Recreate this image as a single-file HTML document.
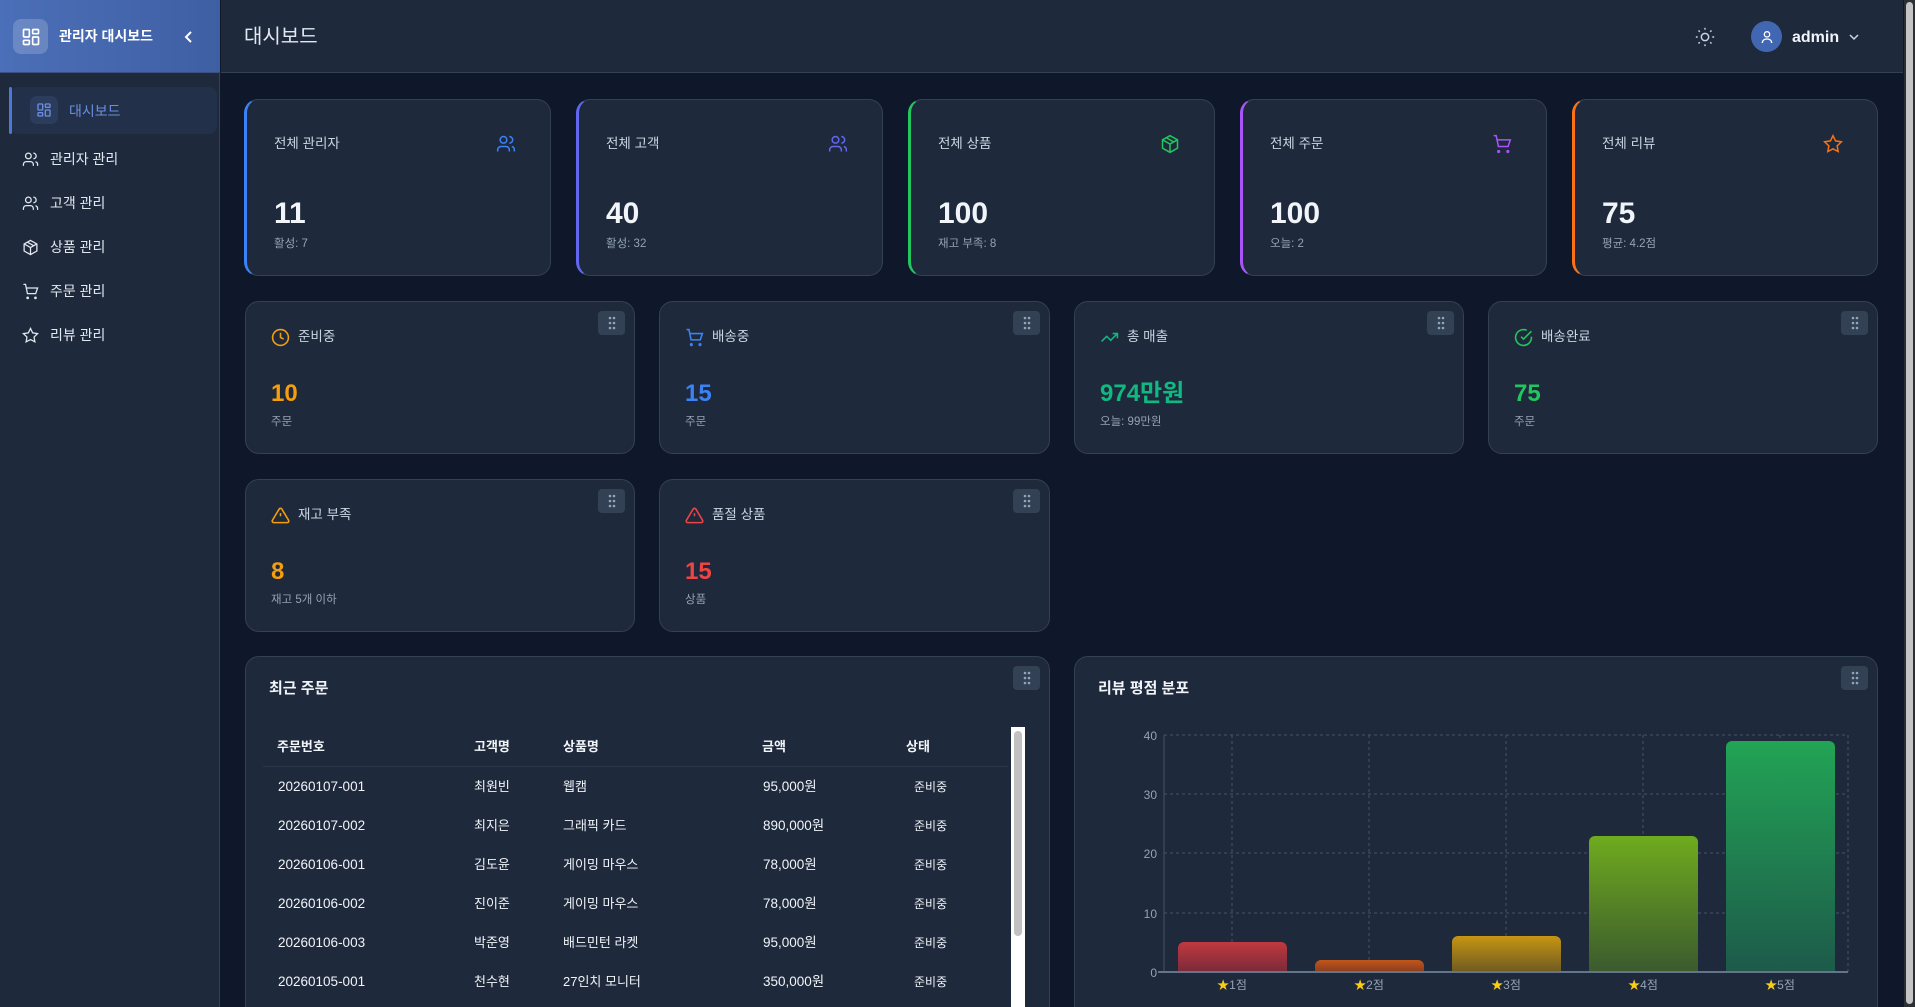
<!DOCTYPE html>
<html><head><meta charset="utf-8"><style>
*{box-sizing:border-box;margin:0;padding:0}
html{width:1915px;height:1007px;overflow:hidden}
body{width:1915px;height:1007px;overflow:hidden;background:#0f172a;font-family:"Liberation Sans","Noto Sans CJK KR",sans-serif;color:#e2e8f0;position:relative;line-height:1.2}
.abs{position:absolute}
.side{left:0;top:0;width:220px;height:1007px;background:#1e293b;border-right:1px solid #334155}
.sh{left:0;top:0;width:220px;height:73px;background:linear-gradient(90deg,#4b6fb8,#3f5fa3);border-bottom:1px solid #3b5080}
.hdr{left:221px;top:0;width:1682px;height:73px;background:#1e293b;border-bottom:1px solid #334155}
.card{position:absolute;background:#1e293b;border:1px solid #334155;border-radius:14px}
.tc .t{position:absolute;left:27px;top:36px;font-size:13.5px;color:#cbd5e1}
.tc .n{position:absolute;left:27px;top:99px;font-size:30px;font-weight:bold;color:#f1f5f9;line-height:1}
.tc .s{position:absolute;left:27px;top:138px;font-size:11.5px;color:#94a3b8}
.tc svg{position:absolute;right:34px;top:34px}
.mc .t{position:absolute;left:25px;top:26px;font-size:13.5px;color:#cbd5e1;display:flex;align-items:center;gap:8px}
.mc .n{position:absolute;left:25px;top:80px;font-size:24px;font-weight:bold;line-height:1}
.mc .s{position:absolute;left:25px;top:114px;font-size:11.5px;color:#94a3b8}
.dh{position:absolute;right:9px;top:9px;width:27px;height:24px;background:#334155;border-radius:4px;display:flex;align-items:center;justify-content:center}
.nav{position:absolute;left:22px;font-size:14px;color:#e2e8f0;display:flex;align-items:center;gap:11px}
.row{position:absolute;font-size:13.5px;color:#f1f5f9;line-height:16px;height:16px}
</style></head><body>
<div class="abs side"></div>
<div class="abs sh"></div>
<div class="abs" style="left:13px;top:19px;width:35px;height:35px;border-radius:8px;background:rgba(255,255,255,.18);display:flex;align-items:center;justify-content:center">
<svg width="20" height="20" viewBox="0 0 24 24" fill="none" stroke="#fff" stroke-width="2"><rect x="3" y="3" width="7" height="9" rx="1"/><rect x="14" y="3" width="7" height="5" rx="1"/><rect x="14" y="12" width="7" height="9" rx="1"/><rect x="3" y="16" width="7" height="5" rx="1"/></svg></div>
<div class="abs" style="left:59px;top:28px;font-size:14px;font-weight:bold;color:#fff">관리자 대시보드</div>
<svg class="abs" style="left:183px;top:30px" width="12" height="14" viewBox="0 0 12 14" fill="none" stroke="#fff" stroke-width="2"><path d="M8 2L3 7l5 5"/></svg>
<div class="abs hdr"></div>
<div class="abs" style="left:244px;top:25px;font-size:20px;color:#e2e8f0">대시보드</div>
<svg class="abs" style="left:1694px;top:26px" width="22" height="22" viewBox="0 0 24 24" fill="none" stroke="#cbd5e1" stroke-width="1.6"><circle cx="12" cy="12" r="4"/><path d="M12 2v2M12 20v2M4.9 4.9l1.4 1.4M17.7 17.7l1.4 1.4M2 12h2M20 12h2M4.9 19.1l1.4-1.4M17.7 6.3l1.4-1.4"/></svg>
<div class="abs" style="left:1751px;top:21px;width:31px;height:31px;border-radius:50%;background:#4267b2;display:flex;align-items:center;justify-content:center">
<svg width="16" height="16" viewBox="0 0 24 24" fill="none" stroke="#fff" stroke-width="2"><circle cx="12" cy="8" r="4"/><path d="M5 21c0-4 3-6 7-6s7 2 7 6"/></svg></div>
<div class="abs" style="left:1792px;top:28px;font-size:16px;font-weight:bold;color:#f1f5f9">admin</div>
<svg class="abs" style="left:1848px;top:32px" width="12" height="10" viewBox="0 0 12 10" fill="none" stroke="#cbd5e1" stroke-width="1.5"><path d="M2 3l4 4 4-4"/></svg>
<div class="abs" style="left:1904px;top:0;width:11px;height:1007px;background:#2b2f36"></div>
<div class="abs" style="left:1906px;top:2px;width:7px;height:1002px;background:#c4c4c4;border-radius:4px"></div>

<div class="abs" style="left:10px;top:87px;width:207px;height:47px;background:#233049;border-radius:8px"></div>
<div class="abs" style="left:9px;top:87px;width:3px;height:47px;background:#4f78d6;border-radius:2px"></div>
<div class="abs" style="left:30px;top:96px;width:28px;height:28px;background:#2c3c5c;border-radius:7px;display:flex;align-items:center;justify-content:center">
<svg width="16" height="16" viewBox="0 0 24 24" fill="none" stroke="#6b8fe0" stroke-width="2"><rect x="3" y="3" width="7" height="9" rx="1"/><rect x="14" y="3" width="7" height="5" rx="1"/><rect x="14" y="12" width="7" height="9" rx="1"/><rect x="3" y="16" width="7" height="5" rx="1"/></svg></div>
<div class="abs" style="left:69px;top:103px;font-size:14px;color:#6b8fe0">대시보드</div>
<div class="nav" style="top:151px"><svg width="17" height="17" viewBox="0 0 24 24" fill="none" stroke="#e2e8f0" stroke-width="1.8"><circle cx="9" cy="7" r="4"/><path d="M2 21v-2a4 4 0 014-4h6a4 4 0 014 4v2M16 3a4 4 0 010 8M22 21v-2a4 4 0 00-3-3.9"/></svg>관리자 관리</div>
<div class="nav" style="top:195px"><svg width="17" height="17" viewBox="0 0 24 24" fill="none" stroke="#e2e8f0" stroke-width="1.8"><circle cx="9" cy="7" r="4"/><path d="M2 21v-2a4 4 0 014-4h6a4 4 0 014 4v2M16 3a4 4 0 010 8M22 21v-2a4 4 0 00-3-3.9"/></svg>고객 관리</div>
<div class="nav" style="top:239px"><svg width="17" height="17" viewBox="0 0 24 24" fill="none" stroke="#e2e8f0" stroke-width="1.8"><path d="M12 2l9 5v10l-9 5-9-5V7z"/><path d="M3 7l9 5 9-5M12 12v10M7.5 4.5l9 5"/></svg>상품 관리</div>
<div class="nav" style="top:283px"><svg width="17" height="17" viewBox="0 0 24 24" fill="none" stroke="#e2e8f0" stroke-width="1.8"><circle cx="8" cy="21" r="1"/><circle cx="19" cy="21" r="1"/><path d="M2 2h3l2.7 13h11.6L22 7H6"/></svg>주문 관리</div>
<div class="nav" style="top:327px"><svg width="17" height="17" viewBox="0 0 24 24" fill="none" stroke="#e2e8f0" stroke-width="1.8"><path d="M12 2l3.1 6.3 6.9 1-5 4.9 1.2 6.8L12 17.8 5.8 21l1.2-6.8-5-4.9 6.9-1z"/></svg>리뷰 관리</div>

<div class="card tc" style="left:244px;top:99px;width:307px;height:177px;border-left:3px solid #3b82f6"><div class="t">전체 관리자</div><svg width="20" height="20" viewBox="0 0 24 24" fill="none" stroke="#3b82f6" stroke-width="1.8"><circle cx="9" cy="7" r="4"/><path d="M2 21v-2a4 4 0 014-4h6a4 4 0 014 4v2M16 3a4 4 0 010 8M22 21v-2a4 4 0 00-3-3.9"/></svg><div class="n">11</div><div class="s">활성: 7</div></div>
<div class="card tc" style="left:576px;top:99px;width:307px;height:177px;border-left:3px solid #6366f1"><div class="t">전체 고객</div><svg width="20" height="20" viewBox="0 0 24 24" fill="none" stroke="#6366f1" stroke-width="1.8"><circle cx="9" cy="7" r="4"/><path d="M2 21v-2a4 4 0 014-4h6a4 4 0 014 4v2M16 3a4 4 0 010 8M22 21v-2a4 4 0 00-3-3.9"/></svg><div class="n">40</div><div class="s">활성: 32</div></div>
<div class="card tc" style="left:908px;top:99px;width:307px;height:177px;border-left:3px solid #22c55e"><div class="t">전체 상품</div><svg width="20" height="20" viewBox="0 0 24 24" fill="none" stroke="#22c55e" stroke-width="1.8"><path d="M12 2l9 5v10l-9 5-9-5V7z"/><path d="M3 7l9 5 9-5M12 12v10M7.5 4.5l9 5"/></svg><div class="n">100</div><div class="s">재고 부족: 8</div></div>
<div class="card tc" style="left:1240px;top:99px;width:307px;height:177px;border-left:3px solid #a855f7"><div class="t">전체 주문</div><svg width="20" height="20" viewBox="0 0 24 24" fill="none" stroke="#a855f7" stroke-width="1.8"><circle cx="8" cy="21" r="1"/><circle cx="19" cy="21" r="1"/><path d="M2 2h3l2.7 13h11.6L22 7H6"/></svg><div class="n">100</div><div class="s">오늘: 2</div></div>
<div class="card tc" style="left:1572px;top:99px;width:306px;height:177px;border-left:3px solid #f97316"><div class="t">전체 리뷰</div><svg width="20" height="20" viewBox="0 0 24 24" fill="none" stroke="#f97316" stroke-width="1.8"><path d="M12 2l3.1 6.3 6.9 1-5 4.9 1.2 6.8L12 17.8 5.8 21l1.2-6.8-5-4.9 6.9-1z"/></svg><div class="n">75</div><div class="s">평균: 4.2점</div></div>

<div class="card mc" style="left:245px;top:301px;width:390px;height:153px"><div class="dh"><svg width="8" height="14"><g fill="#94a3b8"><circle cx="2" cy="2" r="1.3"/><circle cx="6" cy="2" r="1.3"/><circle cx="2" cy="7" r="1.3"/><circle cx="6" cy="7" r="1.3"/><circle cx="2" cy="12" r="1.3"/><circle cx="6" cy="12" r="1.3"/></g></svg></div><div class="t"><svg width="19" height="19" viewBox="0 0 24 24" fill="none" stroke="#f59e0b" stroke-width="2"><circle cx="12" cy="12" r="10"/><path d="M12 6v6l4 2"/></svg>준비중</div><div class="n" style="color:#f59e0b">10</div><div class="s">주문</div></div>
<div class="card mc" style="left:659px;top:301px;width:391px;height:153px"><div class="dh"><svg width="8" height="14"><g fill="#94a3b8"><circle cx="2" cy="2" r="1.3"/><circle cx="6" cy="2" r="1.3"/><circle cx="2" cy="7" r="1.3"/><circle cx="6" cy="7" r="1.3"/><circle cx="2" cy="12" r="1.3"/><circle cx="6" cy="12" r="1.3"/></g></svg></div><div class="t"><svg width="19" height="19" viewBox="0 0 24 24" fill="none" stroke="#3b82f6" stroke-width="2"><circle cx="8" cy="21" r="1"/><circle cx="19" cy="21" r="1"/><path d="M2 2h3l2.7 13h11.6L22 7H6"/></svg>배송중</div><div class="n" style="color:#3b82f6">15</div><div class="s">주문</div></div>
<div class="card mc" style="left:1074px;top:301px;width:390px;height:153px"><div class="dh"><svg width="8" height="14"><g fill="#94a3b8"><circle cx="2" cy="2" r="1.3"/><circle cx="6" cy="2" r="1.3"/><circle cx="2" cy="7" r="1.3"/><circle cx="6" cy="7" r="1.3"/><circle cx="2" cy="12" r="1.3"/><circle cx="6" cy="12" r="1.3"/></g></svg></div><div class="t"><svg width="19" height="19" viewBox="0 0 24 24" fill="none" stroke="#10b981" stroke-width="2"><path d="M22 7l-8.5 8.5-5-5L2 17M16 7h6v6"/></svg>총 매출</div><div class="n" style="color:#10b981">974만원</div><div class="s">오늘: 99만원</div></div>
<div class="card mc" style="left:1488px;top:301px;width:390px;height:153px"><div class="dh"><svg width="8" height="14"><g fill="#94a3b8"><circle cx="2" cy="2" r="1.3"/><circle cx="6" cy="2" r="1.3"/><circle cx="2" cy="7" r="1.3"/><circle cx="6" cy="7" r="1.3"/><circle cx="2" cy="12" r="1.3"/><circle cx="6" cy="12" r="1.3"/></g></svg></div><div class="t"><svg width="19" height="19" viewBox="0 0 24 24" fill="none" stroke="#22c55e" stroke-width="2"><path d="M22 11v1a10 10 0 11-5.9-9.1"/><path d="M9 11l3 3 10-10"/></svg>배송완료</div><div class="n" style="color:#22c55e">75</div><div class="s">주문</div></div>

<div class="card mc" style="left:245px;top:479px;width:390px;height:153px"><div class="dh"><svg width="8" height="14"><g fill="#94a3b8"><circle cx="2" cy="2" r="1.3"/><circle cx="6" cy="2" r="1.3"/><circle cx="2" cy="7" r="1.3"/><circle cx="6" cy="7" r="1.3"/><circle cx="2" cy="12" r="1.3"/><circle cx="6" cy="12" r="1.3"/></g></svg></div><div class="t"><svg width="19" height="19" viewBox="0 0 24 24" fill="none" stroke="#f59e0b" stroke-width="2"><path d="M10.3 3.9L1.8 18a2 2 0 001.7 3h17a2 2 0 001.7-3L13.7 3.9a2 2 0 00-3.4 0zM12 9v4M12 17h.01"/></svg>재고 부족</div><div class="n" style="color:#f59e0b">8</div><div class="s">재고 5개 이하</div></div>
<div class="card mc" style="left:659px;top:479px;width:391px;height:153px"><div class="dh"><svg width="8" height="14"><g fill="#94a3b8"><circle cx="2" cy="2" r="1.3"/><circle cx="6" cy="2" r="1.3"/><circle cx="2" cy="7" r="1.3"/><circle cx="6" cy="7" r="1.3"/><circle cx="2" cy="12" r="1.3"/><circle cx="6" cy="12" r="1.3"/></g></svg></div><div class="t"><svg width="19" height="19" viewBox="0 0 24 24" fill="none" stroke="#ef4444" stroke-width="2"><path d="M10.3 3.9L1.8 18a2 2 0 001.7 3h17a2 2 0 001.7-3L13.7 3.9a2 2 0 00-3.4 0zM12 9v4M12 17h.01"/></svg>품절 상품</div><div class="n" style="color:#ef4444">15</div><div class="s">상품</div></div>

<div class="card" style="left:245px;top:656px;width:805px;height:365px"><div class="dh"><svg width="8" height="14"><g fill="#94a3b8"><circle cx="2" cy="2" r="1.3"/><circle cx="6" cy="2" r="1.3"/><circle cx="2" cy="7" r="1.3"/><circle cx="6" cy="7" r="1.3"/><circle cx="2" cy="12" r="1.3"/><circle cx="6" cy="12" r="1.3"/></g></svg></div></div>
<div class="abs" style="left:269px;top:680px;font-size:15px;font-weight:bold;color:#f1f5f9">최근 주문</div>
<div class="abs" style="left:1011px;top:727px;width:14px;height:280px;background:#fff"></div>
<div class="abs" style="left:1014px;top:731px;width:8px;height:205px;background:#c1c1c1;border-radius:4px"></div>
<div class="row" style="top:739px;left:277px;font-weight:bold;font-size:13px">주문번호</div>
<div class="row" style="top:739px;left:474px;font-weight:bold;font-size:13px">고객명</div>
<div class="row" style="top:739px;left:563px;font-weight:bold;font-size:13px">상품명</div>
<div class="row" style="top:739px;left:762px;font-weight:bold;font-size:13px">금액</div>
<div class="row" style="top:739px;left:906px;font-weight:bold;font-size:13px">상태</div>
<div class="abs" style="left:263px;top:766px;width:745px;height:1px;background:#2a3648"></div>

<div class="row" style="top:779px;left:278px">20260107-001</div><div class="row" style="top:779px;left:474px;font-size:13px">최원빈</div><div class="row" style="top:779px;left:563px;font-size:13px">웹캠</div><div class="row" style="top:779px;left:763px">95,000원</div><div class="row" style="top:779px;left:914px;font-size:12px">준비중</div>
<div class="row" style="top:818px;left:278px">20260107-002</div><div class="row" style="top:818px;left:474px;font-size:13px">최지은</div><div class="row" style="top:818px;left:563px;font-size:13px">그래픽 카드</div><div class="row" style="top:818px;left:763px">890,000원</div><div class="row" style="top:818px;left:914px;font-size:12px">준비중</div>
<div class="row" style="top:857px;left:278px">20260106-001</div><div class="row" style="top:857px;left:474px;font-size:13px">김도윤</div><div class="row" style="top:857px;left:563px;font-size:13px">게이밍 마우스</div><div class="row" style="top:857px;left:763px">78,000원</div><div class="row" style="top:857px;left:914px;font-size:12px">준비중</div>
<div class="row" style="top:896px;left:278px">20260106-002</div><div class="row" style="top:896px;left:474px;font-size:13px">진이준</div><div class="row" style="top:896px;left:563px;font-size:13px">게이밍 마우스</div><div class="row" style="top:896px;left:763px">78,000원</div><div class="row" style="top:896px;left:914px;font-size:12px">준비중</div>
<div class="row" style="top:935px;left:278px">20260106-003</div><div class="row" style="top:935px;left:474px;font-size:13px">박준영</div><div class="row" style="top:935px;left:563px;font-size:13px">배드민턴 라켓</div><div class="row" style="top:935px;left:763px">95,000원</div><div class="row" style="top:935px;left:914px;font-size:12px">준비중</div>
<div class="row" style="top:974px;left:278px">20260105-001</div><div class="row" style="top:974px;left:474px;font-size:13px">천수현</div><div class="row" style="top:974px;left:563px;font-size:13px">27인치 모니터</div><div class="row" style="top:974px;left:763px">350,000원</div><div class="row" style="top:974px;left:914px;font-size:12px">준비중</div>

<div class="card" style="left:1074px;top:656px;width:804px;height:365px"><div class="dh"><svg width="8" height="14"><g fill="#94a3b8"><circle cx="2" cy="2" r="1.3"/><circle cx="6" cy="2" r="1.3"/><circle cx="2" cy="7" r="1.3"/><circle cx="6" cy="7" r="1.3"/><circle cx="2" cy="12" r="1.3"/><circle cx="6" cy="12" r="1.3"/></g></svg></div></div>
<div class="abs" style="left:1098px;top:680px;font-size:15px;font-weight:bold;color:#f1f5f9">리뷰 평점 분포</div>
<svg class="abs" style="left:0;top:0" width="1915" height="1007">
<defs>
<linearGradient id="g1" x1="0" y1="0" x2="0" y2="1"><stop offset="0" stop-color="#c0393f"/><stop offset="1" stop-color="#7a2a3a"/></linearGradient>
<linearGradient id="g2" x1="0" y1="0" x2="0" y2="1"><stop offset="0" stop-color="#c2561a"/><stop offset="1" stop-color="#8a3d1f"/></linearGradient>
<linearGradient id="g3" x1="0" y1="0" x2="0" y2="1"><stop offset="0" stop-color="#c69512"/><stop offset="1" stop-color="#6e5a22"/></linearGradient>
<linearGradient id="g4" x1="0" y1="0" x2="0" y2="1"><stop offset="0" stop-color="#6fab1e"/><stop offset="1" stop-color="#3b5a2e"/></linearGradient>
<linearGradient id="g5" x1="0" y1="0" x2="0" y2="1"><stop offset="0" stop-color="#22a455"/><stop offset="1" stop-color="#1d5a4a"/></linearGradient>
</defs>
<g stroke="#475569" stroke-width="1" stroke-dasharray="3,3">
<line x1="1164" y1="735" x2="1848" y2="735"/><line x1="1164" y1="794" x2="1848" y2="794"/><line x1="1164" y1="853" x2="1848" y2="853"/><line x1="1164" y1="913" x2="1848" y2="913"/>
<line x1="1232" y1="735" x2="1232" y2="972"/><line x1="1369" y1="735" x2="1369" y2="972"/><line x1="1506" y1="735" x2="1506" y2="972"/><line x1="1643" y1="735" x2="1643" y2="972"/><line x1="1780" y1="735" x2="1780" y2="972"/><line x1="1848" y1="735" x2="1848" y2="972"/>
</g>
<path d="M1178 972V948a6 6 0 016-6h97a6 6 0 016 6v24z" fill="url(#g1)"/>
<path d="M1315 972V966a6 6 0 016-6h97a6 6 0 016 6v6z" fill="url(#g2)"/>
<path d="M1452 972V942a6 6 0 016-6h97a6 6 0 016 6v30z" fill="url(#g3)"/>
<path d="M1589 972V842a6 6 0 016-6h97a6 6 0 016 6v130z" fill="url(#g4)"/>
<path d="M1726 972V747a6 6 0 016-6h97a6 6 0 016 6v225z" fill="url(#g5)"/>
<line x1="1164" y1="735" x2="1164" y2="972" stroke="#475569"/>
<line x1="1158" y1="972" x2="1848" y2="972" stroke="#64748b" stroke-width="2"/>
<g font-family="Liberation Sans,sans-serif" font-size="12" fill="#94a3b8" text-anchor="end">
<text x="1157" y="740">40</text><text x="1157" y="799">30</text><text x="1157" y="858">20</text><text x="1157" y="918">10</text><text x="1157" y="977">0</text></g>
<g font-family="Liberation Sans,Noto Sans CJK KR,sans-serif" font-size="12" fill="#94a3b8" text-anchor="middle">
<text x="1232" y="989"><tspan fill="#facc15">★</tspan>1점</text><text x="1369" y="989"><tspan fill="#facc15">★</tspan>2점</text><text x="1506" y="989"><tspan fill="#facc15">★</tspan>3점</text><text x="1643" y="989"><tspan fill="#facc15">★</tspan>4점</text><text x="1780" y="989"><tspan fill="#facc15">★</tspan>5점</text></g>
</svg>
</body></html>
